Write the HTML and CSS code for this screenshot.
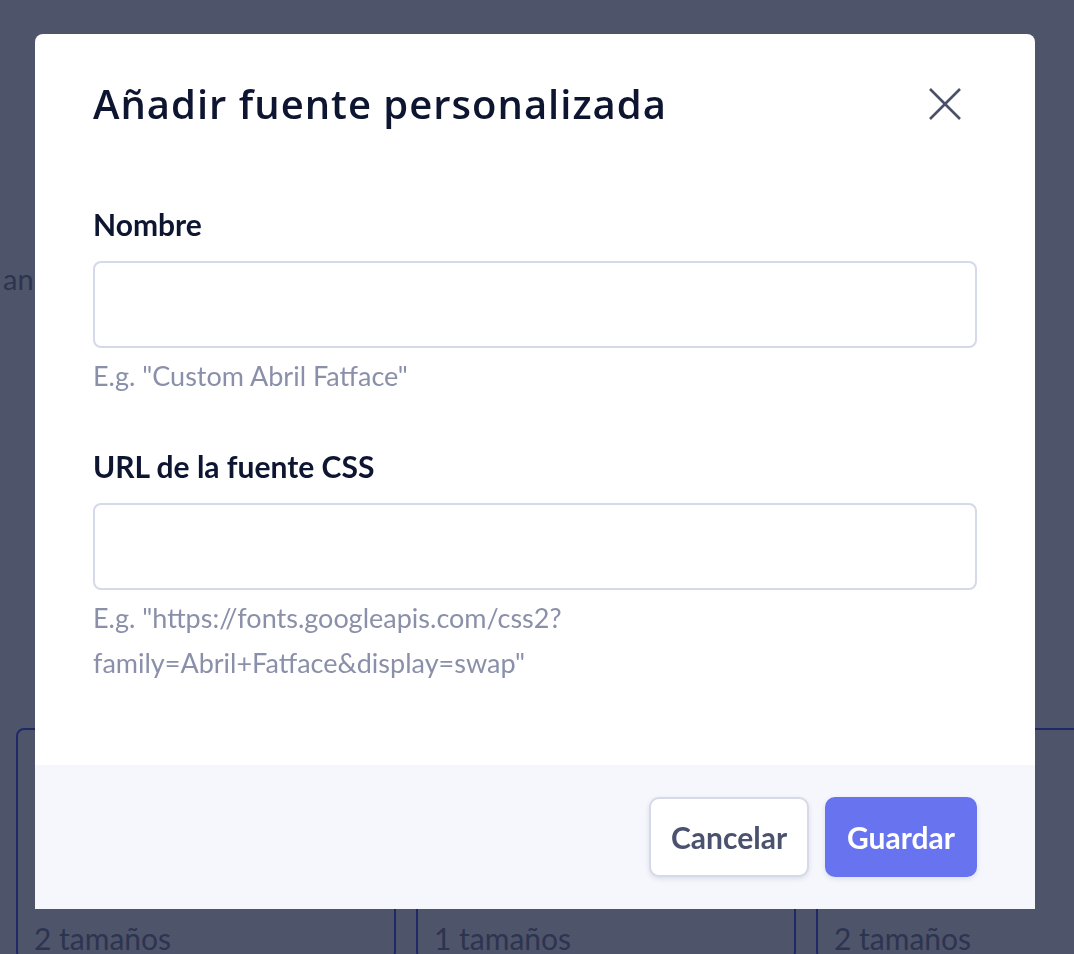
FILE: index.html
```html
<!DOCTYPE html>
<html lang="es">
<head>
<meta charset="utf-8">
<title>Añadir fuente personalizada</title>
<link rel="stylesheet" href="styles.css">
</head>
<body>
<div class="page">
  <p class="intro">an de la biblioteca de fuentes disponibles para tu sitio.</p>
  <div class="cards">
    <div class="card"><div class="preview"></div><div class="card-meta">2 tamaños</div></div>
    <div class="card"><div class="preview"></div><div class="card-meta">1 tamaños</div></div>
    <div class="card"><div class="preview"></div><div class="card-meta">2 tamaños</div></div>
  </div>
</div>

<div class="overlay">
  <div class="modal" role="dialog" aria-labelledby="modal-title">
    <div class="modal-header">
      <h2 class="modal-title" id="modal-title">Añadir fuente personalizada</h2>
      <button class="close-btn" aria-label="Cerrar">
        <svg width="32" height="32" viewBox="0 0 32 32" fill="none" stroke="currentColor" stroke-width="2.6">
          <path d="M1 1 L31 31 M31 1 L1 31"/>
        </svg>
      </button>
    </div>
    <div class="modal-body">
      <div class="field">
        <label class="field-label" for="f-name">Nombre</label>
        <input class="field-input" id="f-name" type="text">
        <p class="field-help">E.g. "Custom Abril Fatface"</p>
      </div>
      <div class="field field-second">
        <label class="field-label" for="f-url">URL de la fuente CSS</label>
        <input class="field-input" id="f-url" type="text">
        <p class="field-help">E.g. "https://fonts.googleapis.com/css2?<br>family=Abril+Fatface&amp;display=swap"</p>
      </div>
    </div>
    <div class="modal-footer">
      <button class="btn btn-secondary">Cancelar</button>
      <button class="btn btn-primary">Guardar</button>
    </div>
  </div>
</div>
</body>
</html>
```
FILE: styles.css
```css
* { box-sizing: border-box; }

html, body {
  margin: 0;
  padding: 0;
  height: 100%;
}

body {
  background: #ffffff;
  font-family: "Lato", "Liberation Sans", sans-serif;
  color: #0d1531;
  overflow: hidden;
}

.page {
  padding: 262px 0 0 3px;
}

.intro {
  margin: 0;
  font-size: 29px;
  line-height: 34px;
  color: #777a96;
  white-space: nowrap;
}

.cards {
  display: flex;
  gap: 20px;
  margin-top: 432px;
  margin-left: 13px;
}

.card {
  flex: 0 0 380px;
  border: 2px solid #3a4ef5;
  border-radius: 8px;
  padding: 0 16px;
}

.preview {
  height: 188px;
}

.card-meta {
  font-size: 30px;
  line-height: 40px;
  color: #777a96;
}

.overlay {
  position: fixed;
  inset: 0;
  background: rgba(23, 30, 58, 0.76);
  padding: 34px 39px 0 35px;
  display: flex;
  justify-content: center;
  align-items: flex-start;
}

.modal {
  width: 1000px;
  background: #ffffff;
  border-radius: 8px 8px 0 0;
  overflow: hidden;
}

.modal-header {
  display: flex;
  align-items: center;
  justify-content: space-between;
  padding: 48px 58px 0;
}

.modal-title {
  margin: 0;
  font-family: "Open Sans", "Noto Sans", sans-serif;
  font-weight: 600;
  font-size: 40px;
  line-height: 43px;
  letter-spacing: 1px;
  color: #0d1531;
}

.close-btn {
  width: 32px;
  height: 32px;
  padding: 0;
  margin-right: 16px;
  border: 0;
  background: none;
  color: #4a5069;
  display: flex;
}

.modal-body {
  padding: 82px 58px 80px;
}

.field {
  display: flex;
  flex-direction: column;
}

.field-second {
  margin-top: 51px;
}

.field-label {
  font-size: 30px;
  line-height: 35px;
  font-weight: 700;
  color: #0d1531;
}

.field-input {
  margin-top: 19px;
  height: 87px;
  border: 2px solid #d5d9e8;
  border-radius: 8px;
  background: #ffffff;
  font: inherit;
}

.field-help {
  margin: 5px 0 0;
  font-size: 27px;
  line-height: 45px;
  color: #8a90a9;
}

.modal-footer {
  background: #f5f7fc;
  padding: 32px 58px;
  display: flex;
  justify-content: flex-end;
  gap: 16px;
}

.btn {
  height: 80px;
  padding: 0 20px;
  border-radius: 10px;
  font-family: "Lato", "Liberation Sans", sans-serif;
  font-size: 30px;
  font-weight: 700;
  cursor: pointer;
}

.btn-secondary {
  background: #ffffff;
  border: 2px solid #d6d9e8;
  color: #4a5270;
  box-shadow: 0 2px 5px rgba(40, 50, 90, 0.12);
}

.btn-primary {
  background: #6773ef;
  border: 2px solid #6773ef;
  color: #ffffff;
  box-shadow: 0 2px 5px rgba(40, 50, 90, 0.12);
}
```
